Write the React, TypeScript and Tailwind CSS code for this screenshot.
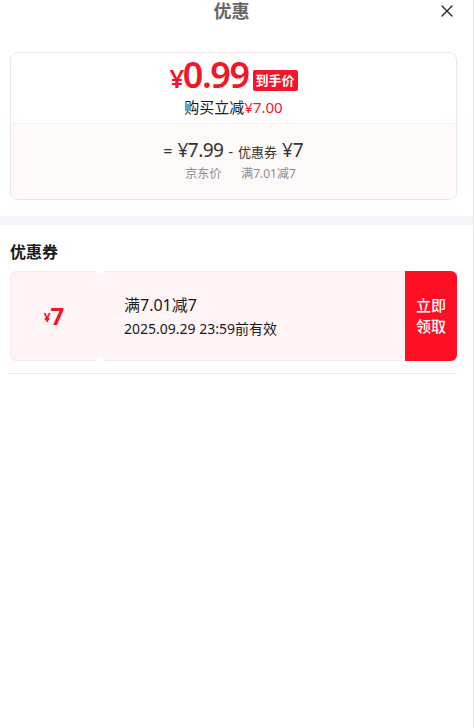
import { X } from 'lucide-react';

const FONT = { fontFamily: '"Noto Sans", "Noto Sans CJK SC", sans-serif' };

function PriceCard() {
  return (
    <div className="ml-[10px] mr-[16px] mt-[12px] overflow-hidden rounded-[8px] border border-[#f1e3e5]">
      <div className="flex h-[70px] flex-col items-center bg-white pt-[8px]">
        <div className="flex h-[35px] items-center gap-[4px]">
          <span className="font-semibold leading-[35px] tracking-[-1.5px] text-[#f2162a]">
            <span className="text-[26px]">¥</span>
            <span className="text-[36px]">0.99</span>
          </span>
          <span className="mt-[3px] rounded-[2px] bg-[#f2162a] px-[3px] py-[1px] text-[13px] font-bold leading-[19px] text-white">
            到手价
          </span>
        </div>
        <div className="mt-[1px] text-[15px] leading-[20px] text-[#1a1a1a]">
          购买立减<span className="text-[#f2162a]">¥7.00</span>
        </div>
      </div>
      <div className="flex h-[76px] flex-col items-center border-t border-[#fbeef0] bg-[#fffafa] pt-[13px]">
        <div className="flex h-[26px] items-baseline gap-[5px] leading-[26px] text-[#333]">
          <span className="text-[16px]">=</span>
          <span className="text-[19px] tracking-[-0.5px]">¥7.99</span>
          <span className="text-[14px]">-</span>
          <span className="text-[13px]">优惠券</span>
          <span className="text-[19px]">¥7</span>
        </div>
        <div className="mt-[2px] flex gap-[20px] pl-[14px] text-[12px] leading-[18px] text-[#8c8c8c]">
          <span>京东价</span>
          <span>满7.01减7</span>
        </div>
      </div>
    </div>
  );
}

function Coupon() {
  return (
    <div className="ml-[10px] mr-[16px] flex h-[90px]">
      <div className="flex w-[89px] items-center justify-center rounded-l-[6px] border border-r-0 border-[#f8eaec] bg-[#fff5f6] pr-[2px] font-bold text-[#f2162a]">
        <span className="mt-[4px] text-[12px]">¥</span>
        <span className="text-[24px] leading-none">7</span>
      </div>
      <div className="relative w-[3px] bg-[#fff5f6]">
        <div className="absolute left-[-2px] top-[-4px] h-[7px] w-[7px] rounded-full bg-white" />
        <div className="absolute bottom-[-4px] left-[-2px] h-[7px] w-[7px] rounded-full bg-white" />
      </div>
      <div className="flex flex-1 flex-col justify-center border border-l-0 border-r-0 border-[#f8eaec] bg-[#fff5f6] pl-[22px]">
        <div className="text-[16px] leading-[22px] text-[#1a1a1a]">满7.01减7</div>
        <div className="mt-[3px] text-[14px] leading-[20px] text-[#1a1a1a]">2025.09.29 23:59前有效</div>
      </div>
      <div className="flex w-[52px] items-center justify-center rounded-r-[6px] bg-[#fe0f23] text-center text-[15px] font-medium leading-[21px] text-white">
        立即
        <br />
        领取
      </div>
    </div>
  );
}

export default function App() {
  return (
    <div className="min-h-[728px] w-[474px] border-r border-[#e6e6e6] bg-white" style={FONT}>
      <div className="relative flex h-[40px] items-start justify-center pr-[10px]">
        <span className="text-[18px] font-bold leading-[22px] text-[#666]">优惠</span>
        <X className="absolute right-[16px] top-[1px] text-[#222]" size={20} strokeWidth={1.6} />
      </div>
      <PriceCard />
      <div className="mt-[16px] h-[9px] bg-[#f5f6fa]" />
      <div className="px-[10px] pb-[8px] pt-[16px] text-[16px] font-bold leading-[22px] text-[#1a1a1a]">优惠券</div>
      <Coupon />
      <div className="ml-[8px] mr-[17px] mt-[12px] h-px bg-[#ebebeb]" />
    </div>
  );
}
